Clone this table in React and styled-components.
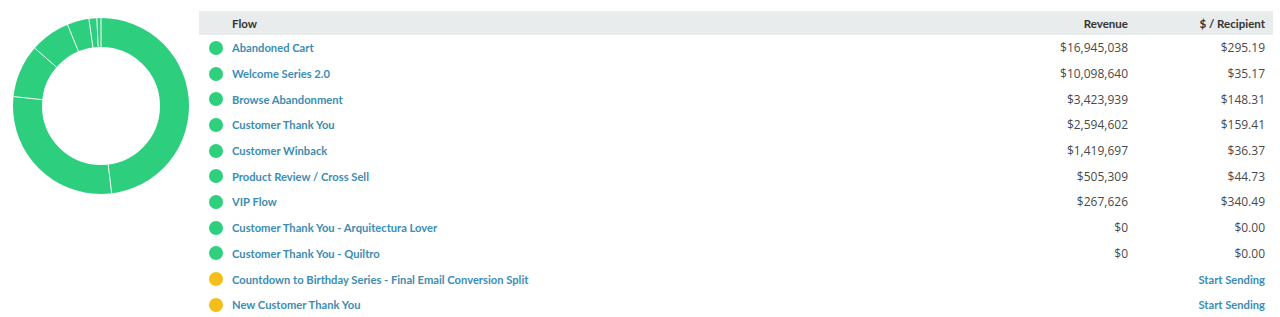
import React from 'react';
import styled, { createGlobalStyle } from 'styled-components';

const GlobalStyle = createGlobalStyle`
  body {
    margin: 0;
    background: #ffffff;
    font-family: 'Open Sans', 'Liberation Sans', sans-serif;
  }
`;

const flows = [
  { name: 'Abandoned Cart', revenue: 16945038, perRecipient: '$295.19', live: true },
  { name: 'Welcome Series 2.0', revenue: 10098640, perRecipient: '$35.17', live: true },
  { name: 'Browse Abandonment', revenue: 3423939, perRecipient: '$148.31', live: true },
  { name: 'Customer Thank You', revenue: 2594602, perRecipient: '$159.41', live: true },
  { name: 'Customer Winback', revenue: 1419697, perRecipient: '$36.37', live: true },
  { name: 'Product Review / Cross Sell', revenue: 505309, perRecipient: '$44.73', live: true },
  { name: 'VIP Flow', revenue: 267626, perRecipient: '$340.49', live: true },
  { name: 'Customer Thank You - Arquitectura Lover', revenue: 0, perRecipient: '$0.00', live: true },
  { name: 'Customer Thank You - Quiltro', revenue: 0, perRecipient: '$0.00', live: true },
  { name: 'Countdown to Birthday Series - Final Email Conversion Split', revenue: null, live: false },
  { name: 'New Customer Thank You', revenue: null, live: false },
];

const Page = styled.div`
  display: flex;
  align-items: flex-start;
  padding-top: 11px;
`;

const ChartBox = styled.div`
  width: 199px;
  flex-shrink: 0;
  padding: 7px 0 0 13px;
  box-sizing: border-box;
`;

const Table = styled.div`
  flex: 1;
  margin-right: 7px;
`;

const Row = styled.div`
  display: grid;
  grid-template-columns: 33px 1fr 150px 137px;
  align-items: center;
  padding-right: 8px;
  height: ${(p) => (p.$head ? '24px' : '25.7px')};
  background: ${(p) => (p.$head ? '#e9ecec' : 'transparent')};
  font-size: 11px;
`;

const HeadCell = styled.div`
  font-family: Lato, 'Open Sans', sans-serif;
  font-size: 11.5px;
  font-weight: 700;
  color: #333333;
  text-align: ${(p) => (p.$right ? 'right' : 'left')};
`;

const Dot = styled.span`
  justify-self: center;
  width: 14px;
  height: 14px;
  border-radius: 50%;
  background: ${(p) => (p.$live ? '#2ecf7d' : '#f4be1b')};
`;

const Link = styled.a`
  font-family: Lato, 'Open Sans', sans-serif;
  font-size: 11.2px;
  color: #3b8db5;
  font-weight: 700;
  text-decoration: none;
  cursor: pointer;
  text-align: ${(p) => (p.$right ? 'right' : 'left')};
`;

const Num = styled.div`
  font-size: 12px;
  font-weight: 400;
  color: #4a4a4a;
  text-align: right;
`;

function polar(cx, cy, r, deg) {
  const a = ((deg - 90) * Math.PI) / 180;
  return [cx + r * Math.cos(a), cy + r * Math.sin(a)];
}

function Donut() {
  const cx = 88;
  const cy = 88;
  const R = 88;
  const r = 59;
  const values = flows.filter((f) => f.revenue > 0).map((f) => f.revenue);
  const total = values.reduce((a, b) => a + b, 0);
  let start = 0;
  const lines = [];
  values.forEach((v) => {
    start += (v / total) * 360;
    const [x1, y1] = polar(cx, cy, r, start);
    const [x2, y2] = polar(cx, cy, R, start);
    lines.push([x1, y1, x2, y2]);
  });
  return (
    <svg width="176" height="176" viewBox="0 0 176 176">
      <circle cx={cx} cy={cy} r={(R + r) / 2} fill="none" stroke="#2dce7e" strokeWidth={R - r} />
      {lines.map(([x1, y1, x2, y2], i) => (
        <line key={i} x1={x1} y1={y1} x2={x2} y2={y2} stroke="#ffffff" strokeWidth="1" />
      ))}
    </svg>
  );
}

const money = (n) => '$' + n.toLocaleString('en-US');

export default function App() {
  return (
    <>
      <GlobalStyle />
      <Page>
        <ChartBox>
          <Donut />
        </ChartBox>
        <Table>
          <Row $head>
            <span />
            <HeadCell>Flow</HeadCell>
            <HeadCell $right>Revenue</HeadCell>
            <HeadCell $right>$ / Recipient</HeadCell>
          </Row>
          {flows.map((f) => (
            <Row key={f.name}>
              <Dot $live={f.live} />
              <Link>{f.name}</Link>
              <Num>{f.revenue !== null ? money(f.revenue) : ''}</Num>
              {f.live ? <Num>{f.perRecipient}</Num> : <Link $right>Start Sending</Link>}
            </Row>
          ))}
        </Table>
      </Page>
    </>
  );
}
